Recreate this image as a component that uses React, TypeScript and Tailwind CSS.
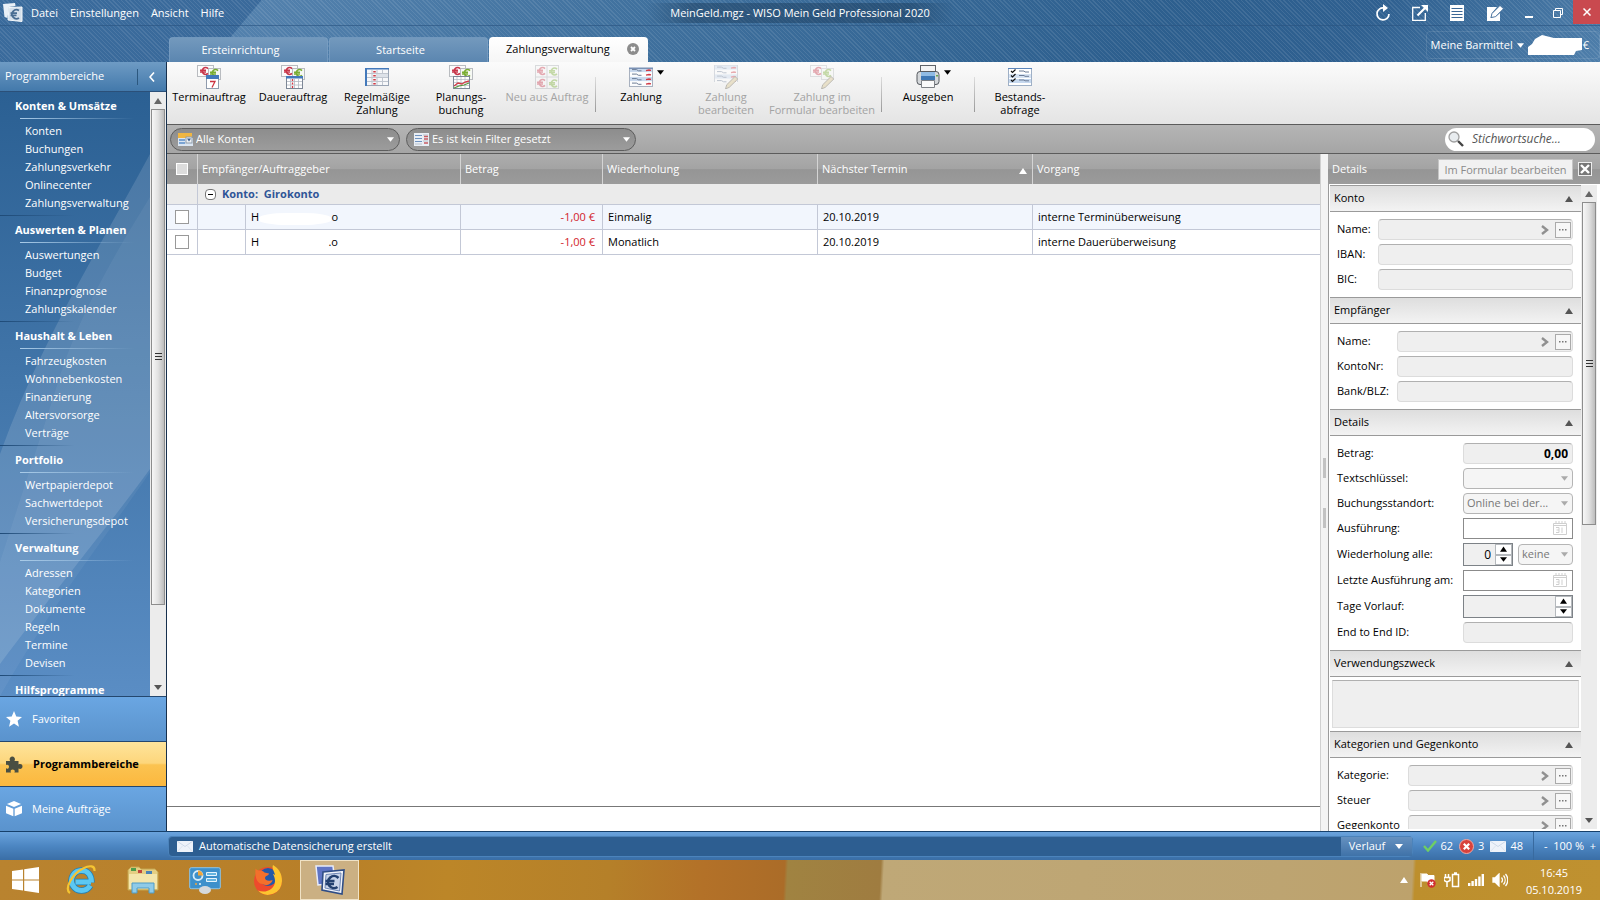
import React from 'react';

const SANS = "font-['Open_Sans','Noto_Sans',sans-serif]";

/* ---------- data ---------- */

const NAV = [
  { title: 'Konten & Umsätze', items: ['Konten', 'Buchungen', 'Zahlungsverkehr', 'Onlinecenter', 'Zahlungsverwaltung'] },
  { title: 'Auswerten & Planen', items: ['Auswertungen', 'Budget', 'Finanzprognose', 'Zahlungskalender'] },
  { title: 'Haushalt & Leben', items: ['Fahrzeugkosten', 'Wohnnebenkosten', 'Finanzierung', 'Altersvorsorge', 'Verträge'] },
  { title: 'Portfolio', items: ['Wertpapierdepot', 'Sachwertdepot', 'Versicherungsdepot'] },
  { title: 'Verwaltung', items: ['Adressen', 'Kategorien', 'Dokumente', 'Regeln', 'Termine', 'Devisen'] },
  { title: 'Hilfsprogramme', items: [] as string[] },
];

const ROWS = [
  { start: 'H', end: 'o', betrag: '-1,00 €', wdh: 'Einmalig', termin: '20.10.2019', vorgang: 'interne Terminüberweisung', tint: true },
  { start: 'H', end: '.o', betrag: '-1,00 €', wdh: 'Monatlich', termin: '20.10.2019', vorgang: 'interne Dauerüberweisung', tint: false },
];

/* ---------- small drawings ---------- */

function Down({ className = '' }: { className?: string }) {
  return (
    <svg viewBox="0 0 8 5" className={`h-[5px] w-2 ${className}`} aria-hidden="true">
      <path d="M0 0h8L4 5z" fill="currentColor" />
    </svg>
  );
}

function Up({ className = '' }: { className?: string }) {
  return (
    <svg viewBox="0 0 8 6" className={`h-[6px] w-2 ${className}`} aria-hidden="true">
      <path d="M0 6h8L4 0z" fill="currentColor" />
    </svg>
  );
}

function EuroMark({ x, y, c }: { x: number; y: number; c: string }) {
  return (
    <g transform={`translate(${x} ${y})`} fill="none" stroke={c} strokeWidth="1.5">
      <path d="M8 1.6A3.4 3.4 0 1 0 8 6.4M0 3.2h6M0 5h6" />
    </g>
  );
}

function Notes() {
  return (
    <>
      <rect x="0.5" y="0.5" width="16" height="11" fill="#fbfbfb" stroke="#b9bcc0" />
      <rect x="11.5" y="3.5" width="12" height="11" fill="#f6f8f4" stroke="#b9bcc0" />
      <EuroMark x={3} y={2} c="#c8364a" />
      <EuroMark x={13} y={4} c="#79ad32" />
    </>
  );
}

function ListLines({ rows = 4, w = 23 }: { rows?: number; w?: number }) {
  return (
    <>
      {Array.from({ length: rows }, (_, i) => (
        <g key={i}>
          <rect x="1" y={3 + i * 4.5} width={w} height="4" fill={i % 2 ? '#fdfdfd' : '#c9d9ee'} />
          <path d={`M3 ${4.6 + i * 4.5}h4.5l2 1.2h3`} stroke="#6c7c96" fill="none" />
          <path d={`M17 ${5.6 + i * 4.5}l3-.6 2 .4`} stroke="#d13b46" strokeWidth="1.4" fill="none" />
        </g>
      ))}
    </>
  );
}

function Pencil() {
  return <path d="M11.500 24l1.200-4.200L21 11.500l2.800 2.500-8.500 8.300z" fill="#d8c48c" stroke="#5f5a4c" strokeWidth=".9" />;
}

type IconName = 'termin' | 'dauer' | 'regel' | 'plan' | 'neu' | 'zahlung' | 'zbearb' | 'fbearb' | 'print' | 'bestand';

function ToolIcon({ name }: { name: IconName }) {
  return (
    <svg viewBox="0 0 24 24" className="h-6 w-6" aria-hidden="true">
      {name === 'termin' && (
        <>
          <Notes />
          <rect x="9.5" y="10.5" width="12" height="13" fill="#fff" stroke="#8f9bad" />
          <rect x="9" y="10" width="13" height="4" fill="#4379bb" />
          <path d="M13 16.500h5l-3 6" stroke="#cc3340" strokeWidth="1.3" fill="none" />
        </>
      )}
      {name === 'dauer' && (
        <>
          <Notes />
          <rect x="5.5" y="11.5" width="16" height="12" fill="#fff" stroke="#7d8796" />
          <rect x="5" y="11" width="17" height="2.5" fill="#4379bb" />
          <path d="M6 16.500h15M6 20h15M9.500 14v9M13.500 14v9M17.500 14v9" stroke="#b3b9c3" strokeWidth=".8" />
          <path d="M11.500 14v9" stroke="#d13b46" strokeDasharray="2 1.5" strokeWidth="1.4" />
        </>
      )}
      {name === 'regel' && (
        <>
          <rect x="0.5" y="3.5" width="23" height="17" fill="#f7f8fa" stroke="#9aa5b5" />
          <rect x="0" y="3" width="24" height="1.5" fill="#4379bb" />
          <rect x="0" y="3" width="2" height="18" fill="#4379bb" />
          <path d="M2 8.500h21M2 12.500h21M2 16.500h21M7 5v15M12 5v15M17.500 5v15" stroke="#c0c6cf" />
          <path d="M9.500 6v14" stroke="#d13b46" strokeWidth="2.5" strokeDasharray="1.5 2.5" />
          <rect x="13" y="9" width="10" height="3" fill="#dde2e9" />
        </>
      )}
      {name === 'plan' && (
        <>
          <Notes />
          <rect x="4.5" y="11.5" width="16" height="12" fill="#fff" stroke="#7d8796" />
          <path d="M5 14.500h15M5 17.500h15M5 20.500h15M8 12v11M12 12v11M16 12v11" stroke="#b3b9c3" strokeWidth=".7" />
          <path d="M5 21l4-3 4 1 3-2 4-1" stroke="#d13b46" strokeWidth="1.3" fill="none" />
          <path d="M5 23l5-2 5-1 5-2" stroke="#59963c" strokeWidth="1.1" fill="none" />
        </>
      )}
      {name === 'neu' && (
        <>
          <rect x="0.5" y="0.5" width="23" height="23" fill="#f7f7f7" stroke="#aaaeb2" />
          <path d="M12 0v24M0 12h24" stroke="#aaaeb2" />
          <EuroMark x={2} y={2} c="#c8364a" />
          <EuroMark x={14} y={2.5} c="#79ad32" />
          <EuroMark x={2} y={14} c="#c8364a" />
          <EuroMark x={14} y={14.5} c="#79ad32" />
        </>
      )}
      {name === 'zahlung' && (
        <>
          <rect x="0.5" y="3.5" width="23" height="18" fill="#f3f6fa" stroke="#a8b1bf" />
          <ListLines w={22} />
          <rect x="0" y="2.5" width="24" height="1.5" fill="#7b92b5" />
        </>
      )}
      {name === 'zbearb' && (
        <>
          <rect x="0.5" y="0.5" width="23" height="16" fill="#f3f6fa" stroke="#a8b1bf" />
          <g transform="translate(0 -2.5)"><ListLines w={22} /></g>
          <Pencil />
        </>
      )}
      {name === 'fbearb' && (
        <>
          <Notes />
          <Pencil />
        </>
      )}
      {name === 'print' && (
        <>
          <rect x="4.5" y="0.5" width="15" height="9" fill="#f4f4f4" stroke="#5f6368" />
          <rect x="1" y="6.5" width="22" height="13" rx="3" fill="#d5d8db" stroke="#55595e" />
          <rect x="5" y="7" width="14" height="8" fill="#3e78b5" />
          <rect x="5" y="7" width="14" height="4" fill="#8fbbe4" />
          <path d="M5.500 15.500h13v7h-13z" fill="#fafafa" stroke="#7d8186" />
          <rect x="20" y="10" width="2" height="1.5" fill="#6aa84f" />
        </>
      )}
      {name === 'bestand' && (
        <>
          <rect x="0.5" y="3.5" width="23" height="17" fill="#fff" stroke="#9fb0c6" />
          <path d="M0 3.500h24" stroke="#5d86bb" />
          <rect x="1" y="9" width="22" height="4" fill="#d6e3f3" />
          <rect x="1" y="14" width="22" height="4" fill="#c6d8ee" />
          <path d="M3 6l1.500 1.500L7.500 4.500M3 10.500L4.500 12l3-3M3 15l1.500 1.500 3-3" stroke="#111" strokeWidth="1.2" fill="none" />
          <path d="M11 6h5l1 1h4M11 10.500h5l1 .8h4M11 15h5l1 .8h4" stroke="#6c7c96" fill="none" />
        </>
      )}
    </svg>
  );
}

function AppLogo({ className }: { className: string }) {
  return (
    <svg viewBox="0 0 30 30" className={className} aria-hidden="true">
      <path d="M1 1h17l2 17-17 2z" fill="#5f74c4" stroke="#e8ecfa" strokeWidth="1.5" />
      <path d="M8 7l21-2-2 24-20-4z" fill="#f1f4fa" stroke="#2f4d86" strokeWidth="1.6" />
      <path d="M11 9.500l15-1.500-1.500 18L10 23z" fill="#c9d4e9" stroke="#6f86b5" />
      <path d="M23.500 13A6 6 0 1 0 22.500 22M10.500 16h9M10.500 19h8.500" fill="none" stroke="#23406f" strokeWidth="2.6" />
    </svg>
  );
}

function AppLogoLight({ className }: { className: string }) {
  return (
    <svg viewBox="0 0 20 20" className={className} aria-hidden="true">
      <path d="M0 1l12-1 .5 3L6 4 4.500 15 1.500 14z" fill="#e9f0f7" />
      <path d="M6 4.500L19 4v14.500L5 17z" fill="#d4e0ec" stroke="#f4f8fb" />
      <path d="M16 7.500a4.500 4.500 0 1 0 0 7.500M7.500 10.200h6.500M7.500 12.400h6" fill="none" stroke="#486d93" strokeWidth="1.8" />
    </svg>
  );
}

function Envelope({ className = '' }: { className?: string }) {
  return (
    <svg viewBox="0 0 16 11" className={`h-[11px] w-4 ${className}`} aria-hidden="true">
      <rect width="16" height="11" fill="#eef3fa" />
      <path d="M0 0l8 5.500L16 0" fill="none" stroke="#ccd8e8" />
      <path d="M0 11l5.500-6M16 11l-5.500-6" fill="none" stroke="#dbe4ef" />
    </svg>
  );
}

/* ---------- header ---------- */

const STRIPES =
  'bg-[repeating-linear-gradient(45deg,rgba(255,255,255,0.09)_0px,rgba(255,255,255,0.09)_1px,transparent_1px,transparent_3px)]';

function WindowIcons() {
  return (
    <div className="flex h-[26px] items-center text-white">
      <button aria-label="Aktualisieren" className="grid w-[37px] place-items-center">
        <svg viewBox="0 0 16 18" className="h-[18px] w-4" fill="none" stroke="currentColor" strokeWidth="1.7">
          <path d="M9 4A6 6 0 1 0 14 10" />
          <path d="M8 0l5 4-5 4z" fill="currentColor" stroke="none" />
        </svg>
      </button>
      <button aria-label="Neues Fenster" className="grid w-[37px] place-items-center">
        <svg viewBox="0 0 16 16" className="h-4 w-4" fill="none" stroke="currentColor">
          <path d="M8 2.500H.7v12.800h12.600V8" strokeWidth="1.3" />
          <path d="M5.500 10.500L13 3" strokeWidth="2.2" />
          <path d="M9 0h7v7z" fill="currentColor" stroke="none" />
        </svg>
      </button>
      <button aria-label="Liste" className="grid w-[37px] place-items-center">
        <svg viewBox="0 0 14 16" className="h-4 w-3.5">
          <rect width="14" height="16" fill="currentColor" />
          <path d="M1.500 3.500h11M1.500 6.500h11M1.500 9.500h11M1.500 12.500h11" stroke="#3b6796" />
        </svg>
      </button>
      <button aria-label="Notiz" className="grid w-10 place-items-center">
        <svg viewBox="0 0 17 16" className="h-4 w-[17px]">
          <path d="M0 2h10L5 8l-1.500 5L9 11.500 13 8v8H0z" fill="currentColor" />
          <path d="M4 12.500l1-4L13 .5l3.500 3.200-8 8z" fill="currentColor" stroke="#3b6796" strokeWidth=".8" />
        </svg>
      </button>
      <button aria-label="Minimieren" className="grid w-7 place-items-center">
        <span className="mt-2 h-0.5 w-2 bg-white" />
      </button>
      <button aria-label="Wiederherstellen" className="grid w-[30px] place-items-center">
        <svg viewBox="0 0 10 10" className="h-2.5 w-2.5" fill="none" stroke="currentColor">
          <path d="M2.500 2.500v-2h7v6h-2M.5 2.500h7v7h-7z" />
        </svg>
      </button>
      <button aria-label="Schließen" className="mb-0.5 grid h-6 w-[27px] place-items-center bg-[#c9494f]">
        <svg viewBox="0 0 8 8" className="h-2 w-2" stroke="currentColor" strokeWidth="1.5">
          <path d="M.5.5l7 7M7.500.5l-7 7" />
        </svg>
      </button>
    </div>
  );
}

function Header() {
  const tab = 'h-full w-[159px] rounded-t border border-b-0 border-[#7fa3c6]/60 bg-gradient-to-b from-[#7399bd] to-[#5b86b0] pr-4 text-white';
  return (
    <header className="bg-[linear-gradient(130deg,#3a6b9c_0px,#3a6a9b_200px,#5381ad_201px,#41729f_480px,#2d5f8e_900px,#2f6090_1060px,#4f7fab_100%)]">
      <div className={STRIPES}>
        <div className="grid h-[26px] grid-cols-[1fr_auto_1fr] items-center border-b border-[#2a5480]/60 text-white">
          <nav className="flex items-center gap-3 pl-[3px]">
            <AppLogoLight className="-mr-1 h-5 w-5" />
            <a href="#datei">Datei</a>
            <a href="#einstellungen">Einstellungen</a>
            <a href="#ansicht">Ansicht</a>
            <a href="#hilfe">Hilfe</a>
          </nav>
          <h1 className="bg-[linear-gradient(90deg,transparent,rgba(20,50,80,0.4)_15%,rgba(20,50,80,0.4)_85%,transparent)] px-6 leading-5">
            MeinGeld.mgz - WISO Mein Geld Professional 2020
          </h1>
          <div className="flex justify-end"><WindowIcons /></div>
        </div>
        <div className="flex h-9 items-end">
          <div role="tablist" className="ml-[169px] flex h-[25px] gap-px">
            <button role="tab" aria-selected="false" className={tab}>Ersteinrichtung</button>
            <button role="tab" aria-selected="false" className={tab}>Startseite</button>
            <div className="flex w-[159px] items-center justify-between rounded-t bg-gradient-to-b from-white to-[#f6f6f6] pl-[17px] pr-[9px]">
              <button role="tab" aria-selected="true" className="text-black">Zahlungsverwaltung</button>
              <button aria-label="Tab schließen">
                <svg viewBox="0 0 12 12" className="mb-0.5 h-3 w-3">
                  <circle cx="6" cy="6" r="6" fill="#8c8c8c" />
                  <path d="M4 4l4 4M8 4L4 8" stroke="#fff" strokeWidth="1.8" />
                </svg>
              </button>
            </div>
          </div>
          <div className="mb-[3px] ml-auto flex h-7 items-center gap-1 rounded border border-white/10 pl-1 pr-2.5 text-white">
            <button className="flex items-center gap-1">Meine Barmittel <Down className="w-[7px]" /></button>
            <svg viewBox="0 0 55 20" className="h-5 w-[55px]" aria-hidden="true">
              <path d="M0 12l4-3 3-5 7-4 12 3h28v12l-6 1-2 4H0z" fill="#fff" />
            </svg>
            <span className="-ml-1">€</span>
          </div>
        </div>
      </div>
    </header>
  );
}

/* ---------- sidebar ---------- */

function ScrollGrip() {
  return (
    <span className="flex flex-col gap-0.5">
      <i className="block h-px w-[7px] bg-[#333]" />
      <i className="block h-px w-[7px] bg-[#333]" />
      <i className="block h-px w-[7px] bg-[#333]" />
    </span>
  );
}

function ScrollBar({ thumb }: { thumb: string }) {
  return (
    <div className="flex w-4 shrink-0 flex-col bg-[#ececec]" aria-hidden="true">
      <div className="grid h-[17px] shrink-0 place-items-center"><Up className="h-1 w-1.5 text-[#666]" /></div>
      <div className="min-h-0 flex-1 px-px">
        <div className={`grid place-items-center border border-[#8d8d8d] bg-gradient-to-r from-[#f7f7f7] via-[#e2e2e2] to-[#bdbdbd] ${thumb}`}>
          <ScrollGrip />
        </div>
      </div>
      <div className="grid h-[17px] shrink-0 place-items-center"><Down className="h-1 w-1.5 text-[#555]" /></div>
    </div>
  );
}

function Sidebar() {
  return (
    <aside className="flex w-[167px] shrink-0 flex-col border-r border-[#17304d] text-white">
      <div className="flex h-[30px] shrink-0 items-center border-b border-[#2b5079] bg-gradient-to-b from-[#6e9bc4] to-[#4379ab] pl-[5px]">
        <span className="flex-1">Programmbereiche</span>
        <span className="h-4 w-px bg-[#2c587f]" />
        <button aria-label="Bereich einklappen" className="grid w-7 place-items-center">
          <svg viewBox="0 0 6 10" className="h-2.5 w-1.5" fill="none" stroke="currentColor" strokeWidth="1.6"><path d="M5 .5L1 5l4 4.500" /></svg>
        </button>
      </div>
      <div className="flex min-h-0 flex-1">
        <nav className="relative min-w-0 flex-1 overflow-hidden bg-gradient-to-b from-[#2b6093] via-[#4276aa] to-[#5a8dc4]">
          <svg viewBox="0 0 150 604" preserveAspectRatio="none" className="absolute inset-0 h-full w-full" aria-hidden="true">
            <path d="M150 62C100 155 40 250 0 362v210c60-80 110-140 150-195z" fill="#fff" opacity=".13" />
            <path d="M150 105C110 170 75 230 55 300L0 470v134h0C60 500 110 440 150 380z" fill="#fff" opacity=".05" />
          </svg>
          <div className="relative -mt-px">
            {NAV.map((g) => (
              <section key={g.title}>
                <div className="h-px bg-gradient-to-r from-[#1f4b78] to-transparent to-50%" />
                <h2 className="h-[26px] pl-[15px] font-bold leading-7">{g.title}</h2>
                <div className="ml-5 mr-4 h-px bg-gradient-to-r from-[#a9cbe8] to-transparent" />
                <ul className="py-[3px] pl-[25px]">
                  {g.items.map((it) => (
                    <li key={it} className="h-[18px] leading-[18px]"><a href="#bereich">{it}</a></li>
                  ))}
                </ul>
              </section>
            ))}
          </div>
        </nav>
        <ScrollBar thumb="h-[87%]" />
      </div>
      <div className="shrink-0">
        <button className="flex h-[45px] w-full items-center gap-2.5 border-t border-[#24476e] bg-gradient-to-b from-[#6aa6e2] to-[#5a93cd] pl-1.5">
          <svg viewBox="0 0 24 24" className="h-4 w-4" fill="currentColor"><path d="M12 0l3.400 8.300 8.600.6-6.600 5.700 2 8.900L12 18.700l-7.400 4.800 2-8.900L0 8.900l8.600-.6z" /></svg>
          Favoriten
        </button>
        <button className="flex h-[45px] w-full items-center gap-2.5 border-t border-[#24476e] bg-[linear-gradient(#fee49c,#fdd67b_48%,#fbc351_52%,#fcb83e)] pl-1.5 font-bold text-black">
          <svg viewBox="0 0 17 17" className="h-[17px] w-[17px]" fill="#4a4f42"><path d="M0 5h4.200C3 3.500 3.800.5 6.300.5S9.600 3.500 8.400 5H12.500v3.600c1.500-1 4-.5 4 1.900s-2.500 2.900-4 1.900v4.100H8.300c1-1.500.3-3-1.600-3s-2.600 1.500-1.600 3H0v-4.200c1.500 1 3 .2 3-1.600s-1.500-2.600-3-1.600z" /></svg>
          Programmbereiche
        </button>
        <button className="flex h-[45px] w-full items-center gap-2.5 border-t border-[#24476e] bg-gradient-to-b from-[#6aa6e2] to-[#5a93cd] pl-1.5">
          <svg viewBox="0 0 17 17" className="h-4 w-4" fill="currentColor"><path d="M8.500 0L16 3.200 8.500 6.500 1 3.200zM0 5l7.800 3.300v8L0 13zM17 5L9.200 8.300v8L17 13z" /></svg>
          Meine Aufträge
        </button>
      </div>
    </aside>
  );
}

/* ---------- toolbar ---------- */

function Tool({ icon, l1, l2, w, off, arrow }: { icon: IconName; l1: string; l2?: string; w: string; off?: boolean; arrow?: boolean }) {
  return (
    <button disabled={off} className={`flex shrink-0 flex-col items-center pt-[3px] ${w} ${off ? 'text-[#a3a3a3]' : 'text-black'}`}>
      <span className={`relative ${off ? 'opacity-40' : ''}`}>
        <ToolIcon name={icon} />
        {arrow && <Down className="absolute -right-[11px] top-[5px] w-[7px]" />}
      </span>
      <span className="mt-px whitespace-nowrap leading-[13px]">
        {l1}
        {l2 && <><br />{l2}</>}
      </span>
    </button>
  );
}

function Sep({ w }: { w: string }) {
  return <div className={`flex shrink-0 justify-center pt-[15px] ${w}`}><span className="h-[35px] w-px bg-gradient-to-b from-[#ddd] to-[#999]" /></div>;
}

function Toolbar() {
  return (
    <div role="toolbar" className="flex h-[63px] shrink-0 items-start border-b border-[#5c5c5c] bg-gradient-to-b from-[#fbfbfb] to-[#e4e4e4]">
      <Tool icon="termin" l1="Terminauftrag" w="w-[84px]" />
      <Tool icon="dauer" l1="Dauerauftrag" w="w-[84px]" />
      <Tool icon="regel" l1="Regelmäßige" l2="Zahlung" w="w-[84px]" />
      <Tool icon="plan" l1="Planungs-" l2="buchung" w="w-[84px]" />
      <Tool icon="neu" l1="Neu aus Auftrag" w="w-[88px]" off />
      <Sep w="w-2" />
      <Tool icon="zahlung" l1="Zahlung" w="w-[84px]" arrow />
      <Tool icon="zbearb" l1="Zahlung" l2="bearbeiten" w="w-[86px]" off />
      <Tool icon="fbearb" l1="Zahlung im" l2="Formular bearbeiten" w="w-[106px]" off />
      <Sep w="w-3" />
      <Tool icon="print" l1="Ausgeben" w="w-[82px]" arrow />
      <Sep w="w-2.5" />
      <Tool icon="bestand" l1="Bestands-" l2="abfrage" w="w-[82px]" />
    </div>
  );
}

function PillSelect({ label, value, children }: { label: string; value: string; children: React.ReactNode }) {
  return (
    <div className="relative flex h-[23px] w-[230px] items-center rounded-full border border-[#5d5d5d] bg-gradient-to-b from-[#8d8d8d] to-[#9c9c9c] text-white">
      <span className="absolute left-[7px]">{children}</span>
      <select aria-label={label} className="h-full w-full appearance-none bg-transparent pl-[25px] outline-none">
        <option>{value}</option>
      </select>
      <Down className="pointer-events-none absolute right-[5px] w-[7px]" />
    </div>
  );
}

function FilterBar() {
  return (
    <div className="flex h-[29px] shrink-0 items-center gap-1.5 border-b border-[#5c5c5c] bg-gradient-to-b from-[#b5b5b5] to-[#a5a5a5] pl-[3px] pr-[5px]">
      <PillSelect label="Konten" value="Alle Konten">
        <svg viewBox="0 0 15 15" className="h-[15px] w-[15px]">
          <rect width="14" height="5" y="1" fill="#f0b642" /><rect y="6" width="15" height="8" fill="#dbe6f2" /><path d="M1 8h6M1 11h6" stroke="#5c8fc9" strokeWidth="1.5" /><rect x="8" y="5" width="6" height="6" fill="#eef1f4" stroke="#8e9cab" /><path d="M9 6.500h4l-2 3z" fill="#3c5f8d" />
        </svg>
      </PillSelect>
      <PillSelect label="Filter" value="Es ist kein Filter gesetzt">
        <svg viewBox="0 0 15 13" className="h-[13px] w-[15px]">
          <rect width="15" height="13" fill="#e9eef5" /><path d="M1 2.500h7M1 5.500h7M1 8.500h7" stroke="#6f92bf" /><path d="M1 11h7M9 2h5M9 8h5" stroke="#b9c2cd" /><path d="M10 3.500h4M10 6h4M10 10h4" stroke="#c65b62" strokeWidth="1.5" />
        </svg>
      </PillSelect>
      <label className="ml-auto flex h-[23px] w-[150px] items-center rounded-full bg-white pl-[3px]">
        <svg viewBox="0 0 16 16" className="h-4 w-4 shrink-0" aria-hidden="true">
          <path d="M10 10l5 5" stroke="#444" strokeWidth="2.4" /><circle cx="6" cy="6" r="5" fill="#e8ecef" stroke="#a0a0a0" strokeWidth="1.3" />
        </svg>
        <input aria-label="Stichwortsuche" placeholder="Stichwortsuche..." className="ml-2 min-w-0 flex-1 bg-transparent text-[12px] italic outline-none placeholder:text-[#555]" />
      </label>
    </div>
  );
}

/* ---------- table ---------- */

const HEAD = 'bg-[linear-gradient(#adadad,#a3a3a3_50%,#959595_52%,#9b9b9b)]';

function DataTable() {
  const th = 'border-r border-[#d4d4d4] pl-1 text-left font-normal';
  const td = 'border-b border-r border-[#c3c8d6]';
  return (
    <table className="w-full table-fixed border-separate border-spacing-0">
      <colgroup>
        <col className="w-[31px]" /><col className="w-12" /><col className="w-[215px]" /><col className="w-[142px]" />
        <col className="w-[215px]" /><col className="w-[215px]" /><col />
      </colgroup>
      <thead>
        <tr className={`h-[30px] text-white ${HEAD}`}>
          <th className="border-r border-[#d4d4d4]">
            <input type="checkbox" aria-label="Alle auswählen" className="mx-auto block h-3 w-3 appearance-none border border-white bg-[#dcdcdc]" />
          </th>
          <th colSpan={2} className={th}>Empfänger/Auftraggeber</th>
          <th className={th}>Betrag</th>
          <th className={th}>Wiederholung</th>
          <th className={th} aria-sort="ascending">
            <span className="flex items-center justify-between pr-[5px]">Nächster Termin <Up className="mt-1 text-white" /></span>
          </th>
          <th className="pl-1 text-left font-normal">Vorgang</th>
        </tr>
      </thead>
      <tbody>
        <tr className="h-[21px] bg-[#ebebeb]">
          <td className={td} />
          <td colSpan={6} className="border-b border-[#c3c8d6] pl-[7px] font-bold text-[#2f5597]">
            <span className="flex items-center gap-1.5">
              <button aria-label="Gruppe einklappen" className="grid h-[11px] w-[11px] place-items-center rounded-sm border border-[#777] bg-white"><i className="block h-px w-[5px] bg-black" /></button>
              <span className="whitespace-pre">Konto:  Girokonto</span>
            </span>
          </td>
        </tr>
        {ROWS.map((r) => (
          <tr key={r.vorgang} className={`h-[25px] ${r.tint ? 'bg-[#f2f6fd]' : 'bg-white'}`}>
            <td className={td}><input type="checkbox" aria-label="Auftrag auswählen" className="mx-auto block h-3.5 w-3.5 appearance-none border border-[#999] bg-white" /></td>
            <td className={td} />
            <td className={`${td} pl-[5px]`}>
              <span className="flex w-[87px] justify-between">
                <span>{r.start}</span><span className="mt-1 h-3 flex-1 rounded-[40%] bg-white" /><span>{r.end}</span>
              </span>
            </td>
            <td className={`${td} pr-[7px] text-right text-[#d2232a]`}>{r.betrag}</td>
            <td className={`${td} pl-[5px]`}>{r.wdh}</td>
            <td className={`${td} pl-[5px]`}>{r.termin}</td>
            <td className="border-b border-[#c3c8d6] pl-[5px]">{r.vorgang}</td>
          </tr>
        ))}
      </tbody>
    </table>
  );
}

/* ---------- details ---------- */

function Section({ title, children, pad = 'pb-[7px] pl-[7px] pr-2 pt-[7px]' }: { title: string; children: React.ReactNode; pad?: string }) {
  return (
    <section>
      <h3>
        <button className="flex h-[27px] w-full items-center justify-between border-y border-[#9a9a9a] bg-gradient-to-b from-[#dedede] to-[#f3f3f3] pl-1 pr-2">
          {title}<Up className="h-[5px] w-1.5 text-[#555]" />
        </button>
      </h3>
      <div className={`flex flex-col gap-1 ${pad}`}>{children}</div>
    </section>
  );
}

function Row({ id, label, children }: { id: string; label: string; children: React.ReactNode }) {
  return (
    <div className="flex items-center">
      <label htmlFor={id} className="flex-1 whitespace-nowrap">{label}</label>
      {children}
    </div>
  );
}

const box = 'rounded-sm border border-[#dcdcdc] border-t-[#b0b0b0] bg-[#efefef] outline-none';

function Field({ id, label, w, lookup, value = '' }: { id: string; label: string; w: string; lookup?: boolean; value?: string }) {
  return (
    <Row id={id} label={label}>
      <div className={`relative shrink-0 ${w}`}>
        <input id={id} readOnly value={value} className={`block h-[21px] w-full px-1 text-right text-[12px] font-bold ${box}`} />
        {lookup && (
          <span className="absolute inset-y-0 right-0.5 flex items-center gap-1.5">
            <svg viewBox="0 0 8 10" className="h-2.5 w-2" fill="none" stroke="#909090" strokeWidth="2.4"><path d="M1 1l5 4-5 4" /></svg>
            <button aria-label={`${label} auswählen`} className="grid h-4 w-4 place-items-center border border-[#aaa] bg-[#f7f7f7] text-[#777]">
              <svg viewBox="0 0 8 2" className="h-0.5 w-2" fill="currentColor"><path d="M0 0h1.500v1.500H0zM3 0h1.500v1.500H3zM6 0h1.500v1.500H6z" /></svg>
            </button>
          </span>
        )}
      </div>
    </Row>
  );
}

function Drop({ id, value, w }: { id: string; value: string; w: string }) {
  return (
    <div className={`relative shrink-0 ${w}`}>
      <select id={id} aria-label={id} disabled className="block h-[21px] w-full appearance-none rounded-sm border border-[#b5b5b5] bg-[#f5f5f5] pl-[3px] text-[#777]">
        <option>{value}</option>
      </select>
      <Down className="absolute right-[5px] top-2 w-[7px] text-[#aaa]" />
    </div>
  );
}

function DateField({ id, label }: { id: string; label: string }) {
  return (
    <Row id={id} label={label}>
      <div className="relative w-[110px] shrink-0">
        <input id={id} readOnly className="block h-[21px] w-full border border-[#8b8b8b] bg-white px-1 outline-none" />
        <svg viewBox="0 0 14 14" className="absolute right-1.5 top-[3px] h-3.5 w-3.5" aria-hidden="true" fill="none" stroke="#cfcfcf">
          <path d="M.5 2.500h13v11H.5zM3 0v2M6 0v2M9 0v2M12 0v2M.5 4.500h13" />
          <path d="M3 6.500h3v5H3M3.500 9H6M9 6.500v5.500" />
        </svg>
      </div>
    </Row>
  );
}

function Spin({ id, value, w }: { id: string; value: string; w: string }) {
  return (
    <div className={`flex h-[23px] shrink-0 border border-[#7d8287] bg-[#f0f0f0] ${w}`}>
      <input id={id} readOnly value={value} className="min-w-0 flex-1 bg-transparent px-1 text-right text-[12px] outline-none" />
      <div className="flex w-[17px] flex-col">
        <button aria-label="Erhöhen" className="grid flex-1 place-items-center border border-[#b5b9bd] bg-white"><Up className="h-1 w-[7px]" /></button>
        <button aria-label="Verringern" className="grid flex-1 place-items-center border border-[#b5b9bd] bg-white"><Down className="h-1 w-[7px]" /></button>
      </div>
    </div>
  );
}

function Details() {
  return (
    <aside className="flex w-[272px] shrink-0 flex-col">
      <div className={`flex h-[30px] shrink-0 items-center pl-1 pr-2 text-white ${HEAD}`}>
        <h2 className="flex-1">Details</h2>
        <button className="h-[21px] w-[135px] whitespace-nowrap border border-[#c5c5c5] bg-[#f1f1f1] leading-none text-[#8a8a8a]">Im Formular bearbeiten</button>
        <button aria-label="Details schließen" className="ml-[5px] grid h-3.5 w-3.5 place-items-center border border-[#eee] bg-[#777]">
          <svg viewBox="0 0 12 12" className="h-3 w-3" stroke="#fff" strokeWidth="2.4"><path d="M2 2l8 8M10 2l-8 8" /></svg>
        </button>
      </div>
      <div className="flex min-h-0 flex-1 border-l border-[#9a9a9a] pb-0.5 pr-[3px] pt-px">
        <div className="min-w-0 flex-1 overflow-hidden pl-px text-black">
          <Section title="Konto">
            <Field id="k-name" label="Name:" w="w-[195px]" lookup />
            <Field id="k-iban" label="IBAN:" w="w-[195px]" />
            <Field id="k-bic" label="BIC:" w="w-[195px]" />
          </Section>
          <Section title="Empfänger">
            <Field id="e-name" label="Name:" w="w-[176px]" lookup />
            <Field id="e-konto" label="KontoNr:" w="w-[176px]" />
            <Field id="e-bank" label="Bank/BLZ:" w="w-[176px]" />
          </Section>
          <Section title="Details">
            <Field id="betrag" label="Betrag:" w="w-[110px]" value="0,00" />
            <Row id="textschluessel" label="Textschlüssel:"><Drop id="textschluessel" value="" w="w-[110px]" /></Row>
            <Row id="standort" label="Buchungsstandort:"><Drop id="standort" value="Online bei der..." w="w-[110px]" /></Row>
            <DateField id="ausf" label="Ausführung:" />
            <Row id="wdh" label="Wiederholung alle:">
              <Spin id="wdh" value="0" w="w-[50px]" />
              <span className="w-[5px]" />
              <Drop id="intervall" value="keine" w="w-[55px]" />
            </Row>
            <DateField id="letzte" label="Letzte Ausführung am:" />
            <Row id="vorlauf" label="Tage Vorlauf:"><Spin id="vorlauf" value="" w="w-[110px]" /></Row>
            <Field id="e2e" label="End to End ID:" w="w-[110px]" />
          </Section>
          <Section title="Verwendungszweck" pad="px-0.5 py-[3px]">
            <textarea aria-label="Verwendungszweck" readOnly className="block h-12 w-full resize-none border border-[#ddd] border-t-[#b0b0b0] bg-[#efefef] outline-none" />
          </Section>
          <Section title="Kategorien und Gegenkonto">
            <Field id="kat" label="Kategorie:" w="w-[165px]" lookup />
            <Field id="steuer" label="Steuer" w="w-[165px]" lookup />
            <Field id="gegen" label="Gegenkonto" w="w-[165px]" lookup />
          </Section>
        </div>
        <ScrollBar thumb="h-[53%]" />
      </div>
    </aside>
  );
}

/* ---------- bottom bars ---------- */

function StatusBar() {
  return (
    <footer className="flex h-[29px] shrink-0 items-center border-t border-[#16406b] bg-gradient-to-b from-[#6aa3dd] via-[#4c86c2] to-[#3a6ea6] text-white">
      <div className="ml-[168px] flex h-[21px] flex-1 items-center gap-1.5 rounded border border-[#4b83bb] bg-[#2d5e91] pl-2">
        <Envelope />
        <span className="flex-1">Automatische Datensicherung erstellt</span>
        <button className="flex h-full w-[71px] items-center justify-center gap-2.5 bg-gradient-to-b from-[#6591c0] to-[#3f72a8]">Verlauf <Down className="h-1.5" /></button>
      </div>
      <div className="ml-2.5 flex items-center gap-1">
        <svg viewBox="0 0 14 12" className="h-3 w-3.5" fill="none" stroke="#6fcf63" strokeWidth="2.4"><path d="M1 6l4 4.500L13 1" /></svg>
        <span>62</span>
        <svg viewBox="0 0 15 15" className="ml-0.5 h-[15px] w-[15px]"><circle cx="7.5" cy="7.5" r="7" fill="#d8423c" stroke="#f0a9a4" /><path d="M4.800 4.800l5.400 5.400M10.200 4.800l-5.400 5.400" stroke="#fff" strokeWidth="2.2" /></svg>
        <span>3</span>
        <Envelope className="ml-0.5" />
        <span>48</span>
      </div>
      <div className="ml-2.5 flex h-full w-[67px] items-center justify-between border-l border-[#386a9f] pl-2.5 pr-1">
        <button aria-label="Verkleinern">-</button><span>100 %</span><button aria-label="Vergrößern">+</button>
      </div>
    </footer>
  );
}

function TaskBar() {
  return (
    <div className="flex h-10 shrink-0 items-center bg-[linear-gradient(93deg,#b9832f_0%,#b87f28_20%,#bc8628_28%,#b58029_38%,#b37128_44%,#ab6c28_49%,#a08341_49.2%,#9f7c40_55%,#bfa877_55.2%,#bda471_80%,#bda26c_88.2%,#bd8f2d_88.400%,#bf9130_100%)] text-white">
      <button aria-label="Start" className="grid w-[50px] place-items-center">
        <svg viewBox="0 0 27 26" className="h-[26px] w-[27px]" fill="#fff"><path d="M0 4l11-1.600v10H0zM12.200 2.200L27 0v12.400H12.200zM0 13.600h11v10L0 22zM12.200 13.600H27V26l-14.800-2.200z" /></svg>
      </button>
      <button aria-label="Internet Explorer" className="grid w-[62px] place-items-center">
        <svg viewBox="0 0 30 30" className="h-[30px] w-[30px]" fill="none">
          <path d="M25 17H9.500M25.500 17.500C25.500 10 21.500 5.500 15.500 5.500a10 10 0 1 0 8.700 15" stroke="#1f7fb8" strokeWidth="6.5" />
          <path d="M25 17H9.500M25.500 17.500C25.500 10 21.500 5.500 15.500 5.500a10 10 0 1 0 8.700 15" stroke="#5cc8f2" strokeWidth="5" />
          <path d="M4 28C-2 24 6 9 17 3.500 24 0 29 .5 28.500 6" stroke="#f5c431" strokeWidth="2.2" />
        </svg>
      </button>
      <button aria-label="Explorer" className="grid w-[62px] place-items-center">
        <svg viewBox="0 0 32 28" className="h-7 w-8">
          <path d="M1 4l3-3h8l2 2h14l3 3v18H1z" fill="#e5cf83" stroke="#c5a54e" /><path d="M4 2h5v3H4z" fill="#4f9d4a" /><path d="M11 4h4v3h-4z" fill="#c2473c" /><path d="M19 5h6v3h-6z" fill="#4c83b6" /><path d="M2 8h28v15H2z" fill="#f4e6ac" />
          <path d="M5 17h22v10h-5v-5H10v5H5z" fill="#8fcbe8" stroke="#4f9cc6" />
        </svg>
      </button>
      <button aria-label="Systemsteuerung" className="grid w-[62px] place-items-center">
        <svg viewBox="0 0 32 28" className="h-7 w-8">
          <rect x=".7" y="1.7" width="30.6" height="21" rx="1.5" fill="#3d90cb" stroke="#8cc3e6" /><circle cx="9" cy="9.5" r="4.5" fill="none" stroke="#d7ecf9" strokeWidth="1.8" /><path d="M9 9.500V4.500a5 5 0 0 1 5 5z" fill="#f0a53b" />
          <path d="M17.500 6.500h10v3h-10zM17.500 12.500h10v3h-10z" fill="#66b5df" stroke="#e6f4fc" /><circle cx="7" cy="18" r="1" fill="#f0a53b" /><circle cx="11" cy="18" r="1" fill="#e6f4fc" /><ellipse cx="16" cy="24" rx="6" ry="4" fill="#d5d9dc" />
        </svg>
      </button>
      <button aria-label="Firefox" className="grid w-16 place-items-center">
        <svg viewBox="0 0 30 30" className="h-[30px] w-[30px]">
          <circle cx="15" cy="16" r="14" fill="#ee4a2c" />
          <circle cx="15" cy="12" r="9" fill="#2359a8" />
          <path d="M20 0c6 3.500 9 9 9 16A14 14 0 0 1 5 25.500c7 3 17-.5 17-9.500 0-3-1-5-2-7 0 0 1.500.5 2 1C21.500 6 18.500 4 20 0z" fill="#fdc52f" />
          <path d="M2.500 3.500C3.500 5 5 5.500 7 5.500c2 0 3 .5 4.500 2l4.500 1c0 2-4 2.200-4 4.500 0 2.500 4 3.500 7.500 2C19 19 13 21.500 9.500 19 5 19 1.500 14 2.500 3.500z" fill="#f4702b" />
        </svg>
      </button>
      <button aria-label="WISO Mein Geld" className="grid h-10 w-[59px] place-items-center border border-[#f0e2c5] bg-[#cbb083]">
        <AppLogo className="h-[30px] w-[30px]" />
      </button>
      <div className="ml-auto flex items-center gap-2">
        <Up className="mr-1 h-1" />
        <svg viewBox="0 0 16 16" className="h-4 w-4"><path d="M1 1v14M2 2h5l1 1.500h6v7H8L7 9H2z" fill="#fff" stroke="#fff" /><circle cx="11.5" cy="11.5" r="4.2" fill="#d12f2f" /><path d="M9.700 9.700l3.600 3.600M13.300 9.700l-3.600 3.600" stroke="#fff" strokeWidth="1.3" /></svg>
        <svg viewBox="0 0 16 16" className="h-4 w-4" fill="none" stroke="#fff" strokeWidth="1.5"><path d="M8.500 2.500h6v12h-6zM10 1h3M1.500 2v3M4.500 2v3M0 5.500h6v3L3 10v5M0 5.500v3L3 10" /></svg>
        <svg viewBox="0 0 16 12" className="h-3 w-4" fill="#fff"><path d="M0 9h2.400v3H0zM3.400 7h2.400v5H3.400zM6.800 5h2.400v7H6.800zM10.200 2.500h2.400V12h-2.400zM13.600 0H16v12h-2.400z" /></svg>
        <svg viewBox="0 0 16 14" className="h-3.5 w-4" fill="none" stroke="#fff" strokeWidth="1.3"><path d="M1 5h2l4-4v12L3 9H1z" fill="#fff" /><path d="M9.500 4.500a4 4 0 0 1 0 5M11.500 2.500a7 7 0 0 1 0 9M13.500 1a9 9 0 0 1 0 12" /></svg>
      </div>
      <div className="ml-[18px] mr-[18px] pt-0.5 text-center leading-[17px]">16:45<br />05.10.2019</div>
    </div>
  );
}

export default function App() {
  return (
    <div className={`flex h-screen flex-col overflow-hidden bg-white text-[11px] ${SANS}`}>
      <Header />
      <div className="flex min-h-0 flex-1">
        <Sidebar />
        <main className="flex min-w-0 flex-1 flex-col">
          <Toolbar />
          <FilterBar />
          <div className="flex min-h-0 flex-1">
            <div className="flex min-w-0 flex-1 flex-col">
              <div className="min-h-0 flex-1"><DataTable /></div>
              <div className="h-[25px] shrink-0 border-t border-[#777]" />
            </div>
            <div className="flex w-2 shrink-0 items-center justify-center border-l border-[#d0d0d0] bg-[#f3f3f3]">
              <div className="flex h-[70px] w-[3px] flex-col justify-between">
                <i className="block h-5 bg-[#c2c2c2]" /><i className="block h-5 bg-[#c2c2c2]" />
              </div>
            </div>
            <Details />
          </div>
        </main>
      </div>
      <StatusBar />
      <TaskBar />
    </div>
  );
}
